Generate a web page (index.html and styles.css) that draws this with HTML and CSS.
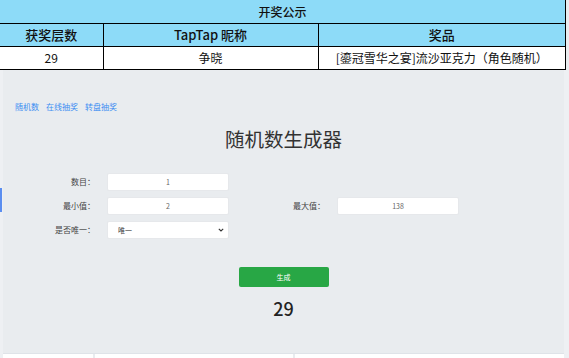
FILE: index.html
```html
<!DOCTYPE html>
<html lang="zh">
<head>
    <meta charset="UTF-8">
    <title>随机数生成器</title>
    <link rel="stylesheet" href="styles.css">
</head>
<body>
    <table class="notice">
        <tr>
            <th colspan="3" class="notice-title">开奖公示</th>
        </tr>
        <tr>
            <th class="col-floor">获奖层数</th>
            <th class="col-name">TapTap 昵称</th>
            <th class="col-prize">奖品</th>
        </tr>
        <tr>
            <td>29</td>
            <td>争晓</td>
            <td>[鎏冠雪华之宴]流沙亚克力（角色随机）</td>
        </tr>
    </table>

    <main class="panel">
        <span class="side-mark"></span>
        <nav class="tabs">
            <a href="#">随机数</a>
            <a href="#">在线抽奖</a>
            <a href="#">转盘抽奖</a>
        </nav>

        <h1>随机数生成器</h1>

        <form class="gen-form">
            <label>数目：</label>
            <input type="text" value="1">
            <span></span>
            <span></span>

            <label>最小值：</label>
            <input type="text" value="2">
            <label>最大值：</label>
            <input type="text" value="138">

            <label>是否唯一：</label>
            <div class="select-wrap">
                <select>
                    <option>唯一</option>
                    <option>可重复</option>
                </select>
                <svg class="chevron" width="6" height="4" viewBox="0 0 6 4">
                    <path d="M0.8 0.8 L3 3 L5.2 0.8" fill="none" stroke="#333" stroke-width="1.1"/>
                </svg>
            </div>
        </form>

        <div class="actions">
            <button class="btn-gen">生成</button>
        </div>
        <div class="result">29</div>

        <div class="bottom-row">
            <div></div>
            <div></div>
            <div></div>
        </div>
    </main>
</body>
</html>
```

FILE: styles.css
```css
* {
    box-sizing: border-box;
    margin: 0;
    padding: 0;
}

body {
    font-family: "Noto Sans CJK SC", "Noto Sans", sans-serif;
    background-color: #e9ecef;
    color: #333;
    width: 569px;
    height: 358px;
    overflow: hidden;
}

.notice {
    width: 566px;
    border-collapse: collapse;
    background-color: #fff;
    font-size: 12px;
    color: #111;
}

.notice th,
.notice td {
    border: 1px solid #000;
    height: 23px;
    padding: 0;
    text-align: center;
    line-height: 21px;
    font-weight: normal;
}

.notice tr:first-child th {
    border-top: none;
}

.notice th:first-child,
.notice td:first-child {
    border-left: none;
}

.notice th {
    background-color: #8ddbf8;
    font-weight: 500;
    font-size: 13px;
}

.notice .notice-title {
    font-size: 12px;
}

.col-floor {
    width: 103px;
}

.col-name {
    width: 215px;
}

.panel {
    position: relative;
    height: 288px;
    border-left: 3px solid #eef0f3;
    border-right: 5px solid #eef0f3;
    padding-top: 31px;
}

.side-mark {
    position: absolute;
    left: -3px;
    top: 118px;
    width: 2px;
    height: 24px;
    background-color: #5b8ef0;
}

.tabs {
    display: flex;
    gap: 7px;
    padding-left: 12px;
    font-size: 8px;
    line-height: 12px;
}

.tabs a {
    color: #3d8ef2;
    text-decoration: none;
}

h1 {
    text-align: center;
    font-size: 19.5px;
    font-weight: normal;
    color: #333;
    line-height: 28px;
    margin-top: 12px;
}

.gen-form {
    display: grid;
    grid-template-columns: 92px 122px 84px 122px;
    column-gap: 12px;
    row-gap: 6px;
    margin-top: 20px;
    font-size: 8px;
}

.gen-form label {
    text-align: right;
    line-height: 18px;
    color: #444;
}

.gen-form input,
.gen-form select {
    width: 100%;
    height: 18px;
    border: 1px solid #e6e8eb;
    border-radius: 2px;
    background-color: #fff;
    font-family: inherit;
    font-size: 7px;
    color: #666;
    text-align: center;
}

.select-wrap {
    position: relative;
}

.gen-form select {
    appearance: none;
    text-align: left;
    padding-left: 10px;
    color: #333;
}

.chevron {
    position: absolute;
    right: 5px;
    top: 7px;
}

.actions {
    display: flex;
    justify-content: center;
    margin-top: 28px;
}

.btn-gen {
    width: 90px;
    height: 20px;
    border: none;
    border-radius: 2px;
    background-color: #28a745;
    color: #fff;
    font-family: inherit;
    font-size: 7px;
}

.result {
    text-align: center;
    font-size: 18px;
    font-weight: 500;
    color: #222;
    line-height: 24px;
    margin-top: 9px;
}

.bottom-row {
    display: grid;
    grid-template-columns: 90px 198px 1fr;
    gap: 2px;
    margin-top: 33px;
    height: 10px;
    border-top: 1px solid #dfe3e8;
}

.bottom-row div {
    background-color: #fff;
}
```
